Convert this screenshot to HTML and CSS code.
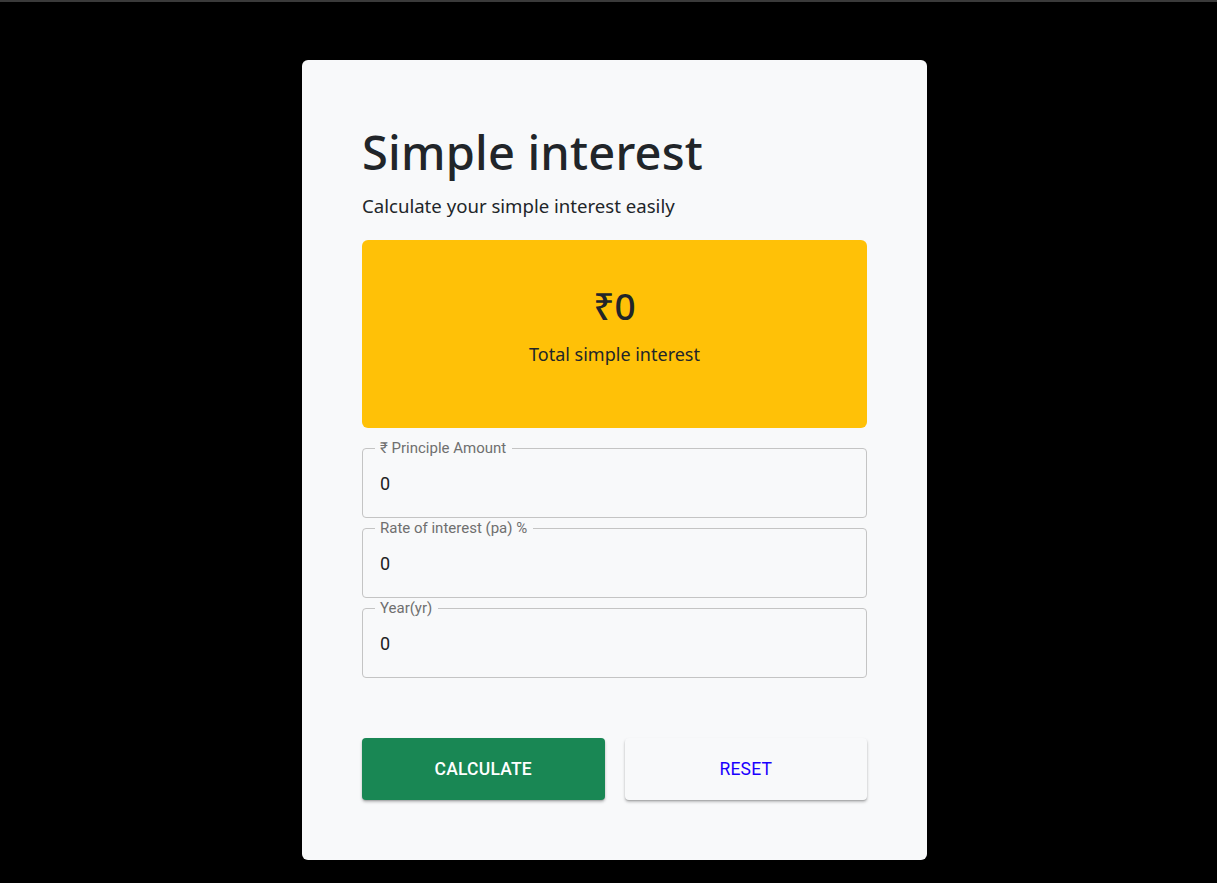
FILE: index.html
```html
<!DOCTYPE html>
<html lang="en">
<head>
<meta charset="utf-8">
<title>Simple interest</title>
<link rel="stylesheet" href="styles.css">
</head>
<body>
<div class="topbar"></div>
<main class="page">
  <section class="card">
    <h1 class="title">Simple interest</h1>
    <p class="subtitle">Calculate your simple interest easily</p>
    <div class="result">
      <div class="amount">₹0</div>
      <div class="result-label">Total simple interest</div>
    </div>
    <form class="fields">
      <fieldset class="field">
        <legend class="field-label">₹ Principle Amount</legend>
        <input class="field-input" type="text" value="0">
      </fieldset>
      <fieldset class="field">
        <legend class="field-label">Rate of interest (pa) %</legend>
        <input class="field-input" type="text" value="0">
      </fieldset>
      <fieldset class="field">
        <legend class="field-label">Year(yr)</legend>
        <input class="field-input" type="text" value="0">
      </fieldset>
    </form>
    <div class="actions">
      <button class="btn btn-calc" type="button">Calculate</button>
      <button class="btn btn-reset" type="button">Reset</button>
    </div>
  </section>
</main>
</body>
</html>
```
FILE: styles.css
```css
html, body {
  margin: 0;
  padding: 0;
  background: #000;
  height: 100%;
}
body {
  font-family: "Noto Sans", "Open Sans", sans-serif;
  color: #212529;
}
.topbar {
  height: 2px;
  background: #3a3a3a;
}
.page {
  display: flex;
  justify-content: center;
  padding-top: 58px;
}
.card {
  width: 505px;
  background: #f8f9fa;
  border-radius: 6px;
  padding: 60px 60px 60px;
  box-sizing: content-box;
  margin-left: 12px;
}
.title {
  margin: 0;
  font-size: 47px;
  font-weight: 500;
  line-height: 65px;
  letter-spacing: 0.2px;
}
.subtitle {
  margin: 8px 0 0;
  font-size: 18.6px;
  line-height: 1.4;
}
.result {
  margin-top: 21px;
  height: 188px;
  background: #ffc107;
  border-radius: 6px;
  display: flex;
  flex-direction: column;
  align-items: center;
  padding-top: 44px;
  box-sizing: border-box;
}
.amount {
  font-size: 37px;
  font-weight: 500;
  line-height: 1.2;
}
.result-label {
  margin-top: 16px;
  font-size: 18px;
  line-height: 1.2;
}
.fields {
  margin-top: 12px;
  display: flex;
  flex-direction: column;
  gap: 10px;
}
.field {
  margin: 0;
  padding: 0 12px;
  height: 78px;
  border: 1px solid #c4c4c4;
  border-radius: 4px;
  box-sizing: border-box;
  display: flex;
  margin-top: -8px;
}
.field:first-child {
  margin-top: 0;
}
.field-label {
  font-family: Roboto, "Liberation Sans", sans-serif;
  font-size: 15px;
  color: #6f6f6f;
  padding: 0 6px 0 5px;
  margin-left: 0;
  line-height: 16px;
}
.field-input {
  border: 0;
  outline: none;
  background: transparent;
  font-family: Roboto, "Liberation Sans", sans-serif;
  font-size: 18px;
  color: #212121;
  padding: 0 0 0 5px;
  width: 100%;
  height: 52px;
  margin-top: 1px;
}
.actions {
  margin-top: 60px;
  display: flex;
  gap: 20px;
}
.btn {
  flex: 1;
  height: 62px;
  border: 0;
  border-radius: 4px;
  font-family: Roboto, "Liberation Sans", sans-serif;
  font-size: 17.5px;
  font-weight: 500;
  text-transform: uppercase;
  letter-spacing: 0.2px;
  box-shadow: 0 2px 3px rgba(0,0,0,0.25), 0 1px 1px rgba(0,0,0,0.12);
  cursor: pointer;
}
.btn-calc {
  background: #198754;
  color: #fff;
}
.btn-reset {
  background: #f8f9fa;
  color: #1a00ff;
  font-weight: 400;
}
```
